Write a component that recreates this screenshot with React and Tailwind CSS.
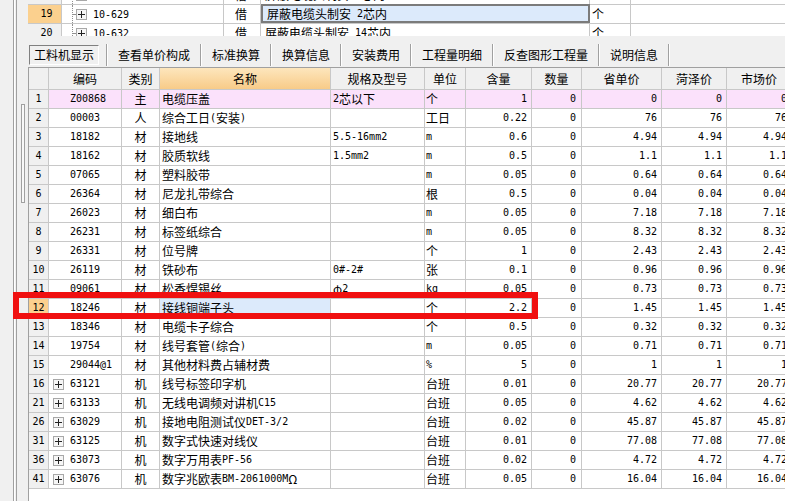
import React from 'react';

const MONO = "[font-family:'DejaVu_Sans_Mono',monospace] text-[10px] whitespace-pre";

function Mixed({ text }) {
  const parts = [];
  let cur = '';
  let curAscii = null;
  for (const ch of text) {
    const a = ch.charCodeAt(0) < 128;
    if (curAscii === null || a === curAscii) {
      cur += ch;
      curAscii = a;
    } else {
      parts.push([cur, curAscii]);
      cur = ch;
      curAscii = a;
    }
  }
  if (cur) parts.push([cur, curAscii]);
  return (
    <>
      {parts.map(([t, a], i) =>
        a ? (
          <span key={i} className={MONO}>{t}</span>
        ) : (
          <span key={i}>{t}</span>
        )
      )}
    </>
  );
}

function PlusBox() {
  return (
    <span className="inline-flex w-[11px] h-[11px] border border-[#a8a8a8] bg-[#f6f6f6] items-center justify-center shrink-0">
      <svg width="7" height="7" viewBox="0 0 7 7" shapeRendering="crispEdges">
        <path d="M0 3.5H7M3.5 0V7" stroke="#222" strokeWidth="1" />
      </svg>
    </span>
  );
}

const COLS = [
  { label: '编码', w: 'w-[73px]' },
  { label: '类别', w: 'w-[38px]' },
  { label: '名称', w: 'w-[171px]' },
  { label: '规格及型号', w: 'w-[94px]' },
  { label: '单位', w: 'w-[41px]' },
  { label: '含量', w: 'w-[66px]' },
  { label: '数量', w: 'w-[50px]' },
  { label: '省单价', w: 'w-[80px]' },
  { label: '菏泽价', w: 'w-[65px]' },
  { label: '市场价', w: 'w-[65px]' },
];

const ROWS = [
  ['1', 'Z00868', '主', '电缆压盖', '2芯以下', '个', '1', '0', '0', '0', '0'],
  ['2', '00003', '人', '综合工日(安装)', '', '工日', '0.22', '0', '76', '76', '76'],
  ['3', '18182', '材', '接地线', '5.5-16mm2', 'm', '0.6', '0', '4.94', '4.94', '4.94'],
  ['4', '18162', '材', '胶质软线', '1.5mm2', 'm', '0.5', '0', '1.1', '1.1', '1.1'],
  ['5', '07065', '材', '塑料胶带', '', 'm', '0.05', '0', '0.64', '0.64', '0.64'],
  ['6', '26364', '材', '尼龙扎带综合', '', '根', '0.5', '0', '0.04', '0.04', '0.04'],
  ['7', '26023', '材', '细白布', '', 'm', '0.05', '0', '7.18', '7.18', '7.18'],
  ['8', '26231', '材', '标签纸综合', '', 'm', '0.05', '0', '8.32', '8.32', '8.32'],
  ['9', '26331', '材', '位号牌', '', '个', '1', '0', '2.43', '2.43', '2.43'],
  ['10', '26119', '材', '铁砂布', '0#-2#', '张', '0.1', '0', '0.96', '0.96', '0.96'],
  ['11', '09061', '材', '松香焊锡丝', 'φ2', 'kg', '0.05', '0', '0.73', '0.73', '0.73'],
  ['12', '18246', '材', '接线铜端子头', '', '个', '2.2', '0', '1.45', '1.45', '1.45'],
  ['13', '18346', '材', '电缆卡子综合', '', '个', '0.5', '0', '0.32', '0.32', '0.32'],
  ['14', '19754', '材', '线号套管(综合)', '', 'm', '0.05', '0', '0.71', '0.71', '0.71'],
  ['15', '29044@1', '材', '其他材料费占辅材费', '', '%', '5', '0', '1', '1', '1'],
  ['16', '63121', '机', '线号标签印字机', '', '台班', '0.01', '0', '20.77', '20.77', '20.77'],
  ['21', '63133', '机', '无线电调频对讲机C15', '', '台班', '0.05', '0', '4.62', '4.62', '4.62'],
  ['26', '63029', '机', '接地电阻测试仪DET-3/2', '', '台班', '0.02', '0', '45.87', '45.87', '45.87'],
  ['31', '63125', '机', '数字式快速对线仪', '', '台班', '0.01', '0', '77.08', '77.08', '77.08'],
  ['36', '63073', '机', '数字万用表PF-56', '', '台班', '0.02', '0', '4.72', '4.72', '4.72'],
  ['41', '63076', '机', '数字兆欧表BM-2061000MΩ', '', '台班', '0.05', '0', '16.04', '16.04', '16.04'],
];

const TABS = ['查看单价构成', '标准换算', '换算信息', '安装费用', '工程量明细', '反查图形工程量', '说明信息'];

function TopRow({ num, code, type, name, unit, selected }) {
  return (
    <div className="flex h-[19px] border-b border-[#c8c8c8] shrink-0">
      <div
        className={
          'w-[34px] border-r border-[#c8c8c8] flex items-center justify-center pl-[4px] ' +
          (selected ? 'bg-[#fbd08e]' : 'bg-[#f0f0f0]')
        }
      >
        <Mixed text={num} />
      </div>
      <div className="relative w-[162px] border-r border-[#c8c8c8] flex items-center pl-[14px]">
        <span className="absolute left-[10px] top-0 bottom-0 w-px border-l border-dotted border-[#909090]" />
        <span className="absolute left-[10px] top-[9px] w-[4px] h-px bg-[#909090]" />
        <PlusBox />
        <span className="ml-[6px]">
          <Mixed text={code} />
        </span>
      </div>
      <div className="w-[37px] border-r border-[#c8c8c8] flex items-center pl-[11px]">{type}</div>
      <div
        className={
          'w-[329px] flex items-center pl-[4px] ' +
          (selected ? 'border-2 border-[#7b7b7b] bg-[#dceafb] -mt-px' : 'border-r border-[#c8c8c8]')
        }
      >
        <Mixed text={name} />
      </div>
      <div className="w-[41px] border-r border-[#c8c8c8] flex items-center pl-[2px]">{unit}</div>
      <div className="flex-1" />
    </div>
  );
}

function Cell({ w, children, align = 'left', extra = '' }) {
  const a =
    align === 'right'
      ? 'justify-end pr-[4px]'
      : align === 'center'
      ? 'justify-center'
      : 'justify-start pl-[2px]';
  return (
    <div className={'shrink-0 h-full border-r border-[#c8c8c8] flex items-center overflow-hidden whitespace-nowrap ' + w + ' ' + a + ' ' + extra}>
      {children}
    </div>
  );
}

function DataRow({ r, idx }) {
  const [num, code, type, name, spec, unit, qty, cnt, p1, p2, p3] = r;
  const pink = idx === 0;
  const sel = num === '12';
  const hasPlus = parseInt(num, 10) >= 16;
  const rowBg = pink ? 'bg-[#fbe1fb]' : 'bg-white';
  return (
    <div className={'flex h-[19px] border-b border-[#c8c8c8] shrink-0 ' + rowBg}>
      <div
        className={
          'shrink-0 w-[20px] h-full border-r border-[#c8c8c8] flex items-center justify-center ' +
          (sel ? 'bg-[#fbd08e]' : 'bg-[#f0f0f0]')
        }
      >
        <Mixed text={num} />
      </div>
      <div className="shrink-0 w-[73px] h-full border-r border-[#c8c8c8] flex items-center pl-[4px]">
        <span className="w-[17px] flex items-center">{hasPlus ? <PlusBox /> : null}</span>
        <Mixed text={code} />
      </div>
      <Cell w="w-[38px]" align="center">{type}</Cell>
      <Cell w="w-[171px]" extra={sel ? 'bg-[#dceafb]' : ''}>
        <Mixed text={name} />
      </Cell>
      <Cell w="w-[94px]">
        <Mixed text={spec} />
      </Cell>
      <Cell w="w-[41px]" extra="!pl-[1px]">
        <Mixed text={unit} />
      </Cell>
      <Cell w="w-[66px]" align="right">
        <Mixed text={qty} />
      </Cell>
      <Cell w="w-[50px]" align="right" extra="!pr-[5px]">
        <Mixed text={cnt} />
      </Cell>
      <Cell w="w-[80px]" align="right">
        <Mixed text={p1} />
      </Cell>
      <Cell w="w-[65px]" align="right">
        <Mixed text={p2} />
      </Cell>
      <Cell w="w-[65px]" align="right">
        <Mixed text={p3} />
      </Cell>
    </div>
  );
}

export default function App() {
  return (
    <div className="relative w-[785px] h-[501px] overflow-hidden bg-[#f0f0f0] flex [font-family:'Noto_Sans_CJK_SC',sans-serif] text-[12px] leading-[14px] text-black">
      {/* left splitter strip */}
      <div className="w-[28px] h-full shrink-0 flex bg-[#f0f0f0]">
        <div className="w-[13px]" />
        <div className="w-px bg-[#a0a0a0]" />
        <div className="w-px bg-white" />
        <div className="w-px" />
        <div className="w-px bg-[#a0a0a0]" />
        <div className="w-[4px]" />
        <div className="flex flex-col">
          <div className="h-[104px]" />
          <div className="w-[4px] h-[99px] border border-[#a0a0a0] bg-[#f8f8f8]" />
        </div>
      </div>

      {/* right content */}
      <div className="flex-1 flex flex-col min-w-0">
        {/* top grid, scrolled */}
        <div className="h-[36px] overflow-hidden bg-white shrink-0">
          <div className="-mt-[14px] flex flex-col">
            <TopRow num="18" code="10-628" type="借" name="屏蔽电缆头制安 2芯内" unit="个" />
            <TopRow num="19" code="10-629" type="借" name="屏蔽电缆头制安 2芯内" unit="个" selected />
            <TopRow num="20" code="10-632" type="借" name="屏蔽电缆头制安 14芯内" unit="个" />
          </div>
        </div>

        {/* tab bar */}
        <div className="h-[32px] shrink-0 flex items-center pt-[7px] border-b border-[#a0a0a0] bg-[#f0f0f0]">
          <div className="ml-px w-[70px] h-[20px] border border-t-[#808080] border-l-[#808080] border-b-white border-r-white flex items-center justify-center">
            工料机显示
          </div>
          <div className="w-[7px]" />
          {TABS.map((t) => (
            <React.Fragment key={t}>
              <div className="w-[2px] h-[22px] border-l border-[#a0a0a0] border-r border-r-white" />
              <div className="px-[10px] h-[20px] flex items-center">{t}</div>
            </React.Fragment>
          ))}
          <div className="w-[2px] h-[22px] border-l border-[#a0a0a0] border-r border-r-white" />
        </div>

        {/* main grid */}
        <div className="flex-1 bg-white border-l border-[#a0a0a0] overflow-hidden flex flex-col">
          <div className="flex h-[22px] shrink-0 border-b border-[#c8c8c8] bg-[#f0f0f0]">
            <div className="shrink-0 w-[20px] h-full border-r border-[#c8c8c8]" />
            {COLS.map((c) => (
              <div
                key={c.label}
                className={
                  'shrink-0 h-full border-r border-[#c8c8c8] flex items-center justify-center ' +
                  c.w +
                  (c.label === '名称' ? ' bg-[linear-gradient(#fde6bd,#f8cb88)]' : '')
                }
              >
                {c.label}
              </div>
            ))}
          </div>
          {ROWS.map((r, i) => (
            <DataRow key={r[0]} r={r} idx={i} />
          ))}
        </div>
      </div>

      {/* red highlight box */}
      <div className="absolute left-[13px] top-[292px] w-[525px] h-[27px] border-[6px] border-[#f01010] pointer-events-none" />
    </div>
  );
}
